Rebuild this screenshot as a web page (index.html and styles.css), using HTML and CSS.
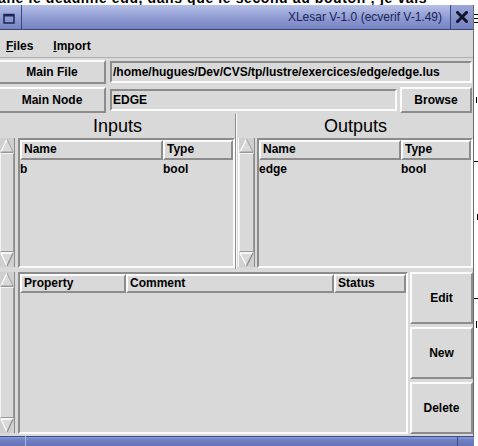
FILE: index.html
```html
<!DOCTYPE html>
<html>
<head>
<meta charset="utf-8">
<title>XLesar</title>
<link rel="stylesheet" href="styles.css">
</head>
<body>
<div class="screen">
  <div class="behind-top"><span>ane le deadline edu, dans que le second au bouton ; je vais</span></div>
  <div class="middle">
    <div class="wincol">
      <div class="window">
        <div class="titlebar">
          <div class="ticon">
            <svg width="12" height="11" viewBox="0 0 12 11"><rect x="1" y="1.5" width="10" height="8.5" fill="none" stroke="#1c2456" stroke-width="1.5"/><rect x="1" y="1" width="10" height="2.5" fill="#1c2456"/></svg>
          </div>
          <div class="ttitle">XLesar V-1.0 (ecverif V-1.49)</div>
          <div class="tclose">
            <svg width="12" height="12" viewBox="0 0 12 12"><path d="M1.5 1.5 L10.5 10.5 M10.5 1.5 L1.5 10.5" stroke="#10142c" stroke-width="3" stroke-linecap="square"/></svg>
          </div>
        </div>
        <div class="menubar">
          <span class="menu"><u>F</u>iles</span>
          <span class="menu"><u>I</u>mport</span>
        </div>
        <div class="row row-file">
          <div class="label raised noleft">Main File</div>
          <div class="entry sunken">/home/hugues/Dev/CVS/tp/lustre/exercices/edge/edge.lus</div>
        </div>
        <div class="row row-node">
          <div class="label raised noleft tall">Main Node</div>
          <div class="entry sunken">EDGE</div>
          <div class="button raised browse">Browse</div>
        </div>
        <div class="io">
          <div class="panel pin">
            <div class="ptitle">Inputs</div>
            <div class="pbody">
              <div class="scroll sb-in">
                <svg class="arr" viewBox="0 0 16 15" preserveAspectRatio="none"><polygon points="8,1 1,14 15,14" fill="#d9d9d9"/><path d="M8 1 L1 14" stroke="#fff" stroke-width="1.4" fill="none"/><path d="M8 1 L15 14" stroke="#a8a8a8" stroke-width="1.2" fill="none"/><path d="M1 14.2 L15 14.2" stroke="#8a8a8a" stroke-width="1.2"/></svg>
                <div class="thumb"></div>
                <svg class="arr" viewBox="0 0 16 15" preserveAspectRatio="none"><polygon points="1,1 15,1 8,14" fill="#d9d9d9"/><path d="M1 1 L15 1 M1 1 L8 14" stroke="#fff" stroke-width="1.4" fill="none"/><path d="M15 1 L8 14" stroke="#8a8a8a" stroke-width="1.4" fill="none"/></svg>
              </div>
              <div class="table sunken">
                <div class="thead">
                  <div class="th raised w-name">Name</div>
                  <div class="th raised grow">Type</div>
                </div>
                <div class="tr"><span class="td w-name">b</span><span class="td">bool</span></div>
              </div>
            </div>
          </div>
          <div class="panel pout">
            <div class="ptitle">Outputs</div>
            <div class="pbody">
              <div class="scroll sb-out">
                <svg class="arr" viewBox="0 0 16 15" preserveAspectRatio="none"><polygon points="8,1 1,14 15,14" fill="#d9d9d9"/><path d="M8 1 L1 14" stroke="#fff" stroke-width="1.4" fill="none"/><path d="M8 1 L15 14" stroke="#a8a8a8" stroke-width="1.2" fill="none"/><path d="M1 14.2 L15 14.2" stroke="#8a8a8a" stroke-width="1.2"/></svg>
                <div class="thumb"></div>
                <svg class="arr" viewBox="0 0 16 15" preserveAspectRatio="none"><polygon points="1,1 15,1 8,14" fill="#d9d9d9"/><path d="M1 1 L15 1 M1 1 L8 14" stroke="#fff" stroke-width="1.4" fill="none"/><path d="M15 1 L8 14" stroke="#8a8a8a" stroke-width="1.4" fill="none"/></svg>
              </div>
              <div class="table sunken">
                <div class="thead">
                  <div class="th raised w-name2">Name</div>
                  <div class="th raised grow">Type</div>
                </div>
                <div class="tr"><span class="td w-name2">edge</span><span class="td">bool</span></div>
              </div>
            </div>
          </div>
        </div>
        <div class="props">
          <div class="scroll sb-prop">
            <svg class="arr" viewBox="0 0 16 15" preserveAspectRatio="none"><polygon points="8,1 1,14 15,14" fill="#d9d9d9"/><path d="M8 1 L1 14" stroke="#fff" stroke-width="1.4" fill="none"/><path d="M8 1 L15 14" stroke="#a8a8a8" stroke-width="1.2" fill="none"/><path d="M1 14.2 L15 14.2" stroke="#8a8a8a" stroke-width="1.2"/></svg>
            <div class="thumb"></div>
            <svg class="arr" viewBox="0 0 16 15" preserveAspectRatio="none"><polygon points="1,1 15,1 8,14" fill="#d9d9d9"/><path d="M1 1 L15 1 M1 1 L8 14" stroke="#fff" stroke-width="1.4" fill="none"/><path d="M15 1 L8 14" stroke="#8a8a8a" stroke-width="1.4" fill="none"/></svg>
          </div>
          <div class="table sunken">
            <div class="thead thead-s">
              <div class="th raised w-prop">Property</div>
              <div class="th raised w-comm">Comment</div>
              <div class="th raised grow">Status</div>
            </div>
          </div>
          <div class="buttons">
            <div class="button raised big">Edit</div>
            <div class="button raised big">New</div>
            <div class="button raised big">Delete</div>
          </div>
        </div>
      </div>
      <div class="bluebar">
        <div class="bseg first"></div>
        <div class="bseg mid"></div>
        <div class="bseg last"></div>
      </div>
    </div>
    <div class="behind-right">
      <div class="mk m1"></div>
      <div class="mk m2"></div>
      <div class="mk m3"></div>
      <div class="mk m4"></div>
      <div class="mk m5"></div>
      <div class="mk m6"></div>
      <div class="mk m7"></div>
      <div class="mk m8"></div>
    </div>
  </div>
</div>
</body>
</html>
```

FILE: styles.css
```css
* { box-sizing: border-box; }
html, body { margin: 0; padding: 0; }
body {
  width: 478px;
  height: 446px;
  overflow: hidden;
  background: #ffffff;
  font-family: "Liberation Sans", Arial, sans-serif;
  font-size: 12px;
  font-weight: bold;
  color: #000;
}
.screen { display: flex; flex-direction: column; width: 478px; height: 446px; }

.behind-top { height: 5px; overflow: hidden; background: #fff; }
.behind-top span {
  display: block;
  white-space: nowrap;
  font-size: 14px;
  line-height: 14px;
  margin-top: -9px;
  margin-left: -2px;
  letter-spacing: 0.6px;
}

.middle { display: flex; flex: 1; }
.wincol { width: 474px; display: flex; flex-direction: column; }
.window {
  height: 431px;
  background: #d9d9d9;
  border-right: 1px solid #6c6c6c;
  display: flex;
  flex-direction: column;
}

.raised { border: 2px solid; border-color: #fbfbfb #8c8c8c #8c8c8c #fbfbfb; }
.sunken { border: 2px solid; border-color: #8c8c8c #fbfbfb #fbfbfb #8c8c8c; }
.noleft { border-left-width: 0; }

/* title bar */
.titlebar {
  height: 25px;
  display: flex;
  background: linear-gradient(#b6c0e6, #8d9ad2 55%, #7684c2);
  border-bottom: 1px solid #3c4676;
}
.ticon {
  width: 22px;
  border-right: 1px solid #3c4676;
  display: flex;
  align-items: center;
  justify-content: center;
  padding: 3px 3px 0 0;
}
.ttitle {
  flex: 1;
  text-align: right;
  padding-right: 8px;
  font-weight: normal;
  font-size: 12px;
  line-height: 24px;
  color: #1c2458;
}
.tclose {
  width: 23px;
  border-left: 1px solid #3c4676;
  background: linear-gradient(#9aa6da, #7482c0);
  display: flex;
  align-items: center;
  justify-content: center;
}

/* menu */
.menubar {
  height: 28px;
  display: flex;
  gap: 20px;
  padding: 4px 0 0 6px;
  line-height: 24px;
  border-bottom: 1px solid #b0b0b0;
}
.menu u { text-decoration: underline; text-underline-offset: 1px; }

/* form rows */
.row { display: flex; align-items: center; }
.row-file { height: 27px; }
.row-node { height: 29px; }
.label {
  width: 106px;
  height: 24px;
  text-align: center;
  line-height: 20px;
}
.label.tall { height: 26px; line-height: 22px; }
.entry {
  flex: 1;
  height: 22px;
  margin-left: 4px;
  margin-right: 1px;
  padding-left: 1px;
  line-height: 18px;
  white-space: nowrap;
  overflow: hidden;
}
.row-node .entry { margin-right: 3px; }
.button {
  text-align: center;
  display: flex;
  align-items: center;
  justify-content: center;
}
.browse { width: 72px; height: 26px; margin-right: 1px; }

/* inputs / outputs */
.io { height: 155px; display: flex; }
.panel { display: flex; flex-direction: column; }
.pin { width: 236px; border-right: 1px solid #8c8c8c; }
.pout { flex: 1; border-left: 1px solid #fbfbfb; padding-left: 1px; }
.ptitle {
  height: 24px;
  line-height: 24px;
  text-align: center;
  font-size: 18px;
  font-weight: normal;
}
.pbody { height: 130px; display: flex; }
.pin .pbody { gap: 3px; }
.pout .pbody { gap: 2px; }

.scroll {
  display: flex;
  flex-direction: column;
  background: #cfcfcf;
  border-right: 1px solid #8c8c8c;
}
.sb-in { width: 15px; height: 129px; }
.sb-out { width: 17px; height: 129px; border-left: 1px solid #fbfbfb; }
.sb-prop { width: 15px; height: 161px; }
.arr { display: block; width: 100%; height: 15px; flex: none; }
.thumb {
  flex: 1;
  background: #d9d9d9;
  border: 1px solid;
  border-color: #f4f4f4 #9a9a9a #9a9a9a #f4f4f4;
}

.table { flex: 1; display: flex; flex-direction: column; }
.thead { display: flex; height: 20px; flex: none; }
.thead-s { height: 19px; }
.th { line-height: 15px; padding-left: 2px; white-space: nowrap; overflow: hidden; }
.thead-s .th { line-height: 14px; }
.w-name { width: 143px; flex: none; }
.w-name2 { width: 142px; flex: none; }
.w-prop { width: 106px; flex: none; }
.w-comm { width: 208px; flex: none; }
.grow { flex: 1; }
.tr { display: flex; padding-top: 2px; line-height: 15px; }
.td { display: block; }
.tr .w-name, .tr .w-name2 { padding-left: 0; }

/* properties */
.props { height: 167px; display: flex; padding: 3px 0 2px 0; gap: 3px; }
.props .table { height: 162px; flex: 1; margin-right: -1px; }
.buttons { width: 63px; display: flex; flex-direction: column; gap: 3px; margin-left: 0; }
.big { flex: 1; }

/* bottom blue bar */
.bluebar {
  height: 10px;
  display: flex;
  background: linear-gradient(#3e4c8a 0, #3e4c8a 1px, #8c9ad6 1px, #7080c2 4px, #6474b6);
}
.bseg { height: 100%; }
.bseg.first { width: 26px; border-right: 1px solid #a8b4e4; }
.bseg.mid { flex: 1; }
.bseg.last { width: 17px; border-left: 1px solid #3e4c8a; }

/* background page on the right */
.behind-right { flex: 1; background: #fff; display: flex; flex-direction: column; }
.mk { background: #000; flex: none; }
.m1 { height: 1px; margin-top: 9px; width: 4px; }
.m2 { height: 1px; margin-top: 3px; width: 4px; }
.m3 { height: 1px; margin-top: 3px; width: 4px; }
.m4 { height: 6px; margin-top: 74px; width: 1px; margin-left: 2px; }
.m5 { height: 1px; margin-top: 58px; width: 4px; }
.m6 { height: 6px; margin-top: 52px; width: 1px; margin-left: 3px; }
.m7 { height: 1px; margin-top: 78px; width: 4px; }
.m8 { height: 7px; margin-top: 22px; width: 1px; margin-left: 2px; }
```
